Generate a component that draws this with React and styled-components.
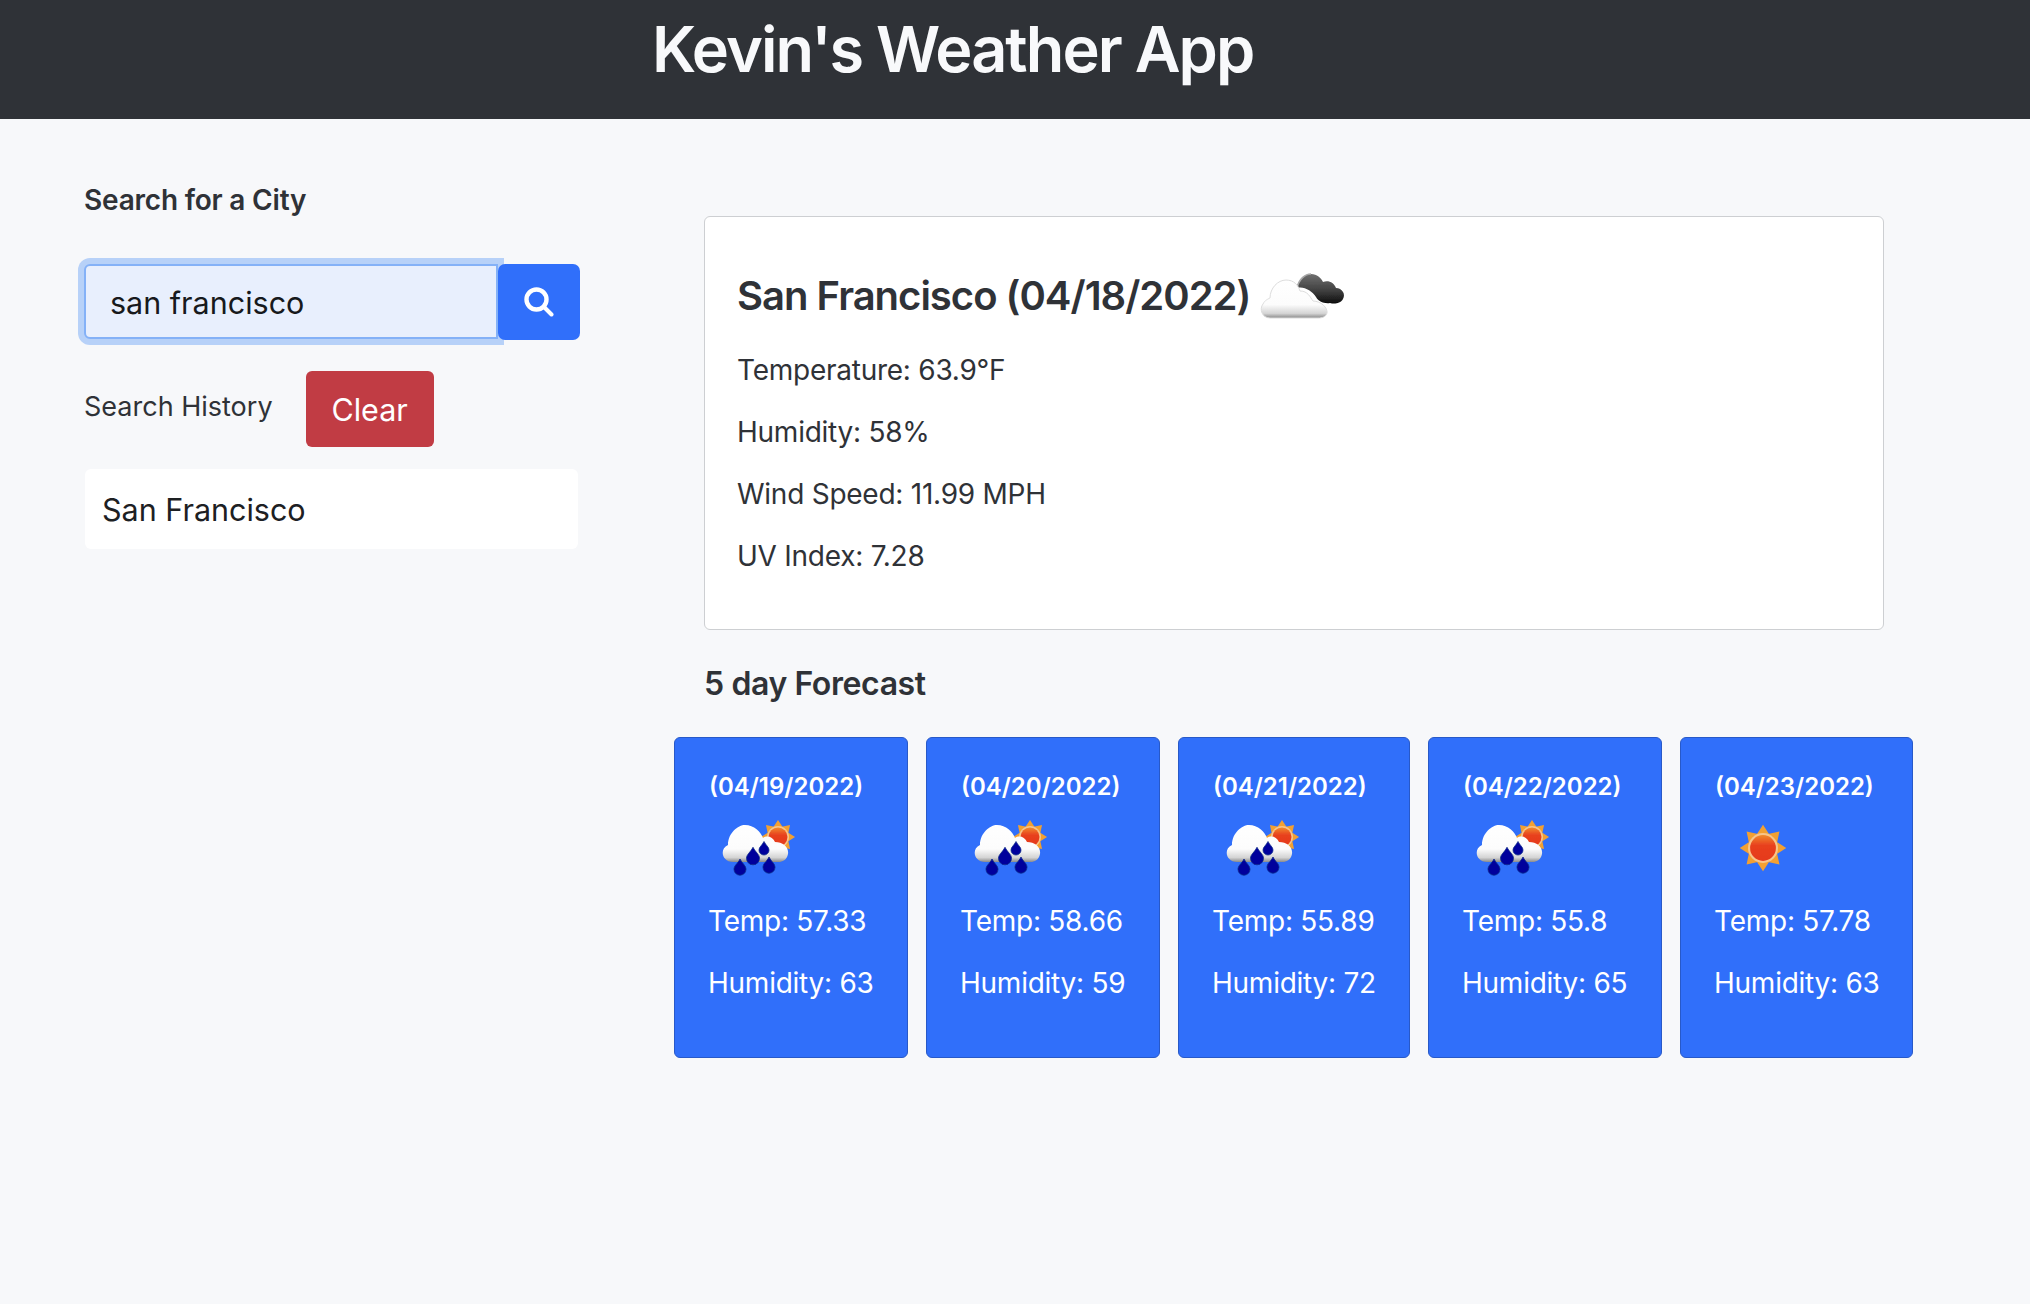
import styled, { createGlobalStyle } from "styled-components";

const forecast = [
    { date: "(04/19/2022)", temp: "57.33", humidity: "63", icon: "rain", width: 234 },
    { date: "(04/20/2022)", temp: "58.66", humidity: "59", icon: "rain", width: 234 },
    { date: "(04/21/2022)", temp: "55.89", humidity: "72", icon: "rain", width: 232 },
    { date: "(04/22/2022)", temp: "55.8", humidity: "65", icon: "rain", width: 234 },
    { date: "(04/23/2022)", temp: "57.78", humidity: "63", icon: "sun", width: 233 },
];

function SunShape({ cx, cy, r }) {
    const rays = [0, 45, 90, 135, 180, 225, 270, 315];
    return (
        <g>
            {rays.map(a => (
                <polygon
                    key={a}
                    points={`${cx - r * 0.42},${cy - r * 0.9} ${cx},${cy - r * 1.55} ${cx + r * 0.42},${cy - r * 0.9}`}
                    fill="#f2a033"
                    transform={`rotate(${a} ${cx} ${cy})`}
                />
            ))}
            <circle cx={cx} cy={cy} r={r} fill="#f7c58a" />
            <circle cx={cx} cy={cy} r={r * 0.86} fill="url(#sunFill)" />
        </g>
    );
}

function Drop({ x, y, s }) {
    return (
        <path
            d={`M${x} ${y - s * 1.5} C${x + s * 0.4} ${y - s * 0.7} ${x + s} ${y - s * 0.4} ${x + s} ${y + s * 0.2} A${s} ${s} 0 1 1 ${x - s} ${y + s * 0.2} C${x - s} ${y - s * 0.4} ${x - s * 0.4} ${y - s * 0.7} ${x} ${y - s * 1.5} Z`}
            fill="#00009c"
            stroke="#0c2a8a"
            strokeWidth="0.8"
        />
    );
}

function SvgDefs() {
    return (
        <svg width="0" height="0" style={{ position: "absolute" }}>
            <defs>
                <linearGradient id="sunFill" x1="0" y1="0" x2="0" y2="1">
                    <stop offset="0" stopColor="#f08a2c" />
                    <stop offset="0.4" stopColor="#e8401f" />
                    <stop offset="1" stopColor="#e5391f" />
                </linearGradient>
                <linearGradient id="whiteCloud" x1="0" y1="0" x2="0" y2="1">
                    <stop offset="0" stopColor="#ffffff" />
                    <stop offset="0.65" stopColor="#fcfcfc" />
                    <stop offset="0.88" stopColor="#d4d4d4" />
                    <stop offset="1" stopColor="#8a8a8a" />
                </linearGradient>
                <linearGradient id="darkCloud" x1="0" y1="0" x2="0" y2="1">
                    <stop offset="0" stopColor="#707070" />
                    <stop offset="0.6" stopColor="#3c3c3c" />
                    <stop offset="1" stopColor="#0c0c0c" />
                </linearGradient>
                <filter id="soft" x="-10%" y="-10%" width="120%" height="120%">
                    <feGaussianBlur stdDeviation="0.7" />
                </filter>
            </defs>
        </svg>
    );
}

function SearchGlyph() {
    return (
        <svg width="30" height="30" viewBox="0 0 30 30" fill="none" stroke="#ffffff">
            <circle cx="12.5" cy="12.5" r="10" strokeWidth="4.4" />
            <line x1="20.5" y1="20.5" x2="27.5" y2="27.5" strokeWidth="4" strokeLinecap="round" />
        </svg>
    );
}

function RainIcon() {
    return (
        <svg width="90" height="63" viewBox="0 0 90 63">
            <g filter="url(#soft)">
                <SunShape cx={69} cy={23} r={11} />
                <path
                    d="M24 48 C13 48 10 35 19 31 C19 19 29 11 36 11 C45 11 52 18 54 24 C58 21 64 23 66 28 C74 28 80 33 79 40 C78 46 73 48 70 48 Z"
                    fill="url(#whiteCloud)"
                />
                <Drop x={55} y={35} s={5} />
                <Drop x={44} y={43} s={6.5} />
                <Drop x={31} y={54} s={6} />
                <Drop x={60} y={52} s={6} />
            </g>
        </svg>
    );
}

function SunIcon() {
    return (
        <svg width="90" height="63" viewBox="0 0 90 63">
            <g filter="url(#soft)">
                <SunShape cx={48} cy={34} r={15} />
            </g>
        </svg>
    );
}

function CloudIcon() {
    return (
        <svg width="88" height="50" viewBox="0 0 88 50">
            <g filter="url(#soft)">
                <path
                    d="M39 17 C41 8 47 3 53 3 C59 3 63 7 65 11 C71 9 76 12 78 17 C84 17 88 23 85 28 C82 33 76 33 72 32 C66 33 60 30 58 26 C54 20 46 15 39 17 Z"
                    fill="url(#darkCloud)"
                />
                <path d="M39 17 C41 8 47 3 53 3" fill="none" stroke="#a8a8a8" strokeWidth="1.6" />
                <path
                    d="M12 47 C4 47 1 38 5 33 C7 29 10 28 12 27 C12 17 20 9 28 9 C36 9 40 14 42 20 C50 20 52 26 55 30 C63 30 70 37 69 42 C68 46 64 47 60 47 Z"
                    fill="url(#whiteCloud)"
                    stroke="#dcdcdc"
                    strokeWidth="1"
                />
            </g>
        </svg>
    );
}

export default function App() {
    return (
        <>
            <GlobalStyle />
            <SvgDefs />
            <Header>
                <Title>Kevin's Weather App</Title>
            </Header>
            <Page>
                <Sidebar>
                    <SearchLabel>Search for a City</SearchLabel>
                    <SearchRow>
                        <SearchInput defaultValue="san francisco" />
                        <SearchButton type="button" aria-label="Search">
                            <SearchGlyph />
                        </SearchButton>
                    </SearchRow>
                    <HistoryRow>
                        <HistoryLabel>Search History</HistoryLabel>
                        <ClearButton type="button">Clear</ClearButton>
                    </HistoryRow>
                    <HistoryItem>San Francisco</HistoryItem>
                </Sidebar>
                <Main>
                    <CurrentCard>
                        <CityRow>
                            <CityName>San Francisco (04/18/2022)</CityName>
                            <CloudIcon />
                        </CityRow>
                        <Stat>Temperature: 63.9°F</Stat>
                        <Stat>Humidity: 58%</Stat>
                        <Stat>Wind Speed: 11.99 MPH</Stat>
                        <Stat>UV Index: 7.28</Stat>
                    </CurrentCard>
                    <ForecastTitle>5 day Forecast</ForecastTitle>
                    <ForecastRow>
                        {forecast.map(day => (
                            <DayCard key={day.date} $width={day.width}>
                                <DayDate>{day.date}</DayDate>
                                <DayIcon>{day.icon === "sun" ? <SunIcon /> : <RainIcon />}</DayIcon>
                                <DayStat>Temp: {day.temp}</DayStat>
                                <DayStat>Humidity: {day.humidity}</DayStat>
                            </DayCard>
                        ))}
                    </ForecastRow>
                </Main>
            </Page>
        </>
    );
}

const GlobalStyle = createGlobalStyle`
    html, body {
        margin: 0;
        min-height: 100%;
        background: #f7f8fa;
    }
    body {
        font-family: Inter, "Liberation Sans", sans-serif;
        color: #2f3237;
    }
    * {
        box-sizing: border-box;
    }
`;

const Header = styled.header`
    height: 119px;
    background: #2f3237;
    padding-left: 652px;
`;

const Title = styled.h1`
    margin: 0;
    padding-top: 13px;
    font-size: 63px;
    line-height: 72px;
    font-weight: 600;
    letter-spacing: -1.95px;
    color: #f8f9fb;
`;

const Page = styled.main`
    display: flex;
    padding-left: 84px;
`;

const Sidebar = styled.aside`
    width: 496px;
    padding-top: 67px;
    flex-shrink: 0;
`;

const SearchLabel = styled.h2`
    margin: 0 0 49px;
    font-size: 28px;
    line-height: 29px;
    font-weight: 600;
    letter-spacing: -0.2px;
`;

const SearchRow = styled.div`
    display: flex;
    height: 76px;
`;

const SearchInput = styled.input`
    width: 414px;
    height: 75px;
    padding: 2px 24px 0;
    background: #e8effd;
    border: 2px solid #84b1f7;
    border-radius: 6px 0 0 6px;
    outline: none;
    box-shadow: 0 0 0 6px #b7d1f8;
    font-family: inherit;
    font-size: 30.5px;
    color: #17191c;
`;

const SearchButton = styled.button`
    position: relative;
    z-index: 1;
    width: 82px;
    height: 76px;
    padding: 0;
    display: flex;
    align-items: center;
    justify-content: center;
    background: #306ffa;
    border: none;
    border-radius: 7px;
`;

const HistoryRow = styled.div`
    display: flex;
    align-items: flex-start;
    gap: 33px;
    margin-top: 31px;
`;

const HistoryLabel = styled.div`
    padding-top: 20px;
    font-size: 27px;
    line-height: 32px;
`;

const ClearButton = styled.button`
    width: 128px;
    height: 76px;
    padding: 0;
    background: #c13c44;
    border: none;
    border-radius: 6px;
    color: #ffffff;
    font-family: inherit;
    font-size: 30.5px;
`;

const HistoryItem = styled.div`
    width: 493px;
    height: 80px;
    margin: 22px 0 0 1px;
    padding-left: 17px;
    display: flex;
    align-items: center;
    background: #ffffff;
    border-radius: 6px;
    font-size: 30.5px;
    color: #1d2023;
`;

const Main = styled.section`
    margin-left: 94px;
    padding-top: 97px;
`;

const CurrentCard = styled.div`
    width: 1180px;
    height: 414px;
    margin-left: 30px;
    padding: 50px 32px 0;
    background: #ffffff;
    border: 1px solid #cdcfd2;
    border-radius: 6px;
`;

const CityRow = styled.div`
    display: flex;
    align-items: center;
    gap: 8px;
    height: 58px;
    margin-bottom: 14px;
`;

const CityName = styled.h3`
    margin: 0;
    font-size: 40px;
    line-height: 48px;
    font-weight: 600;
    letter-spacing: -1px;
`;

const Stat = styled.p`
    margin: 0;
    padding-top: 14px;
    height: 62px;
    font-size: 28px;
    line-height: 34px;
    letter-spacing: -0.25px;
`;

const ForecastTitle = styled.h4`
    margin: 35px 0 34px 30px;
    font-size: 32px;
    line-height: 38px;
    font-weight: 600;
    letter-spacing: -0.4px;
`;

const ForecastRow = styled.div`
    display: flex;
    gap: 18px;
`;

const DayCard = styled.article`
    width: ${props => props.$width}px;
    height: 321px;
    padding: 34px 0 0 34px;
    background: #306ffa;
    border: 1px solid #2859c8;
    border-radius: 6px;
    color: #ffffff;
`;

const DayDate = styled.h5`
    margin: 0;
    font-size: 24px;
    line-height: 29px;
    font-weight: 600;
    white-space: nowrap;
`;

const DayIcon = styled.div`
    height: 63px;
    margin-top: 13px;
`;

const DayStat = styled.p`
    margin: 26px 0 0 -1px;
    font-size: 28px;
    line-height: 36px;
    letter-spacing: -0.25px;
    white-space: nowrap;
`;
